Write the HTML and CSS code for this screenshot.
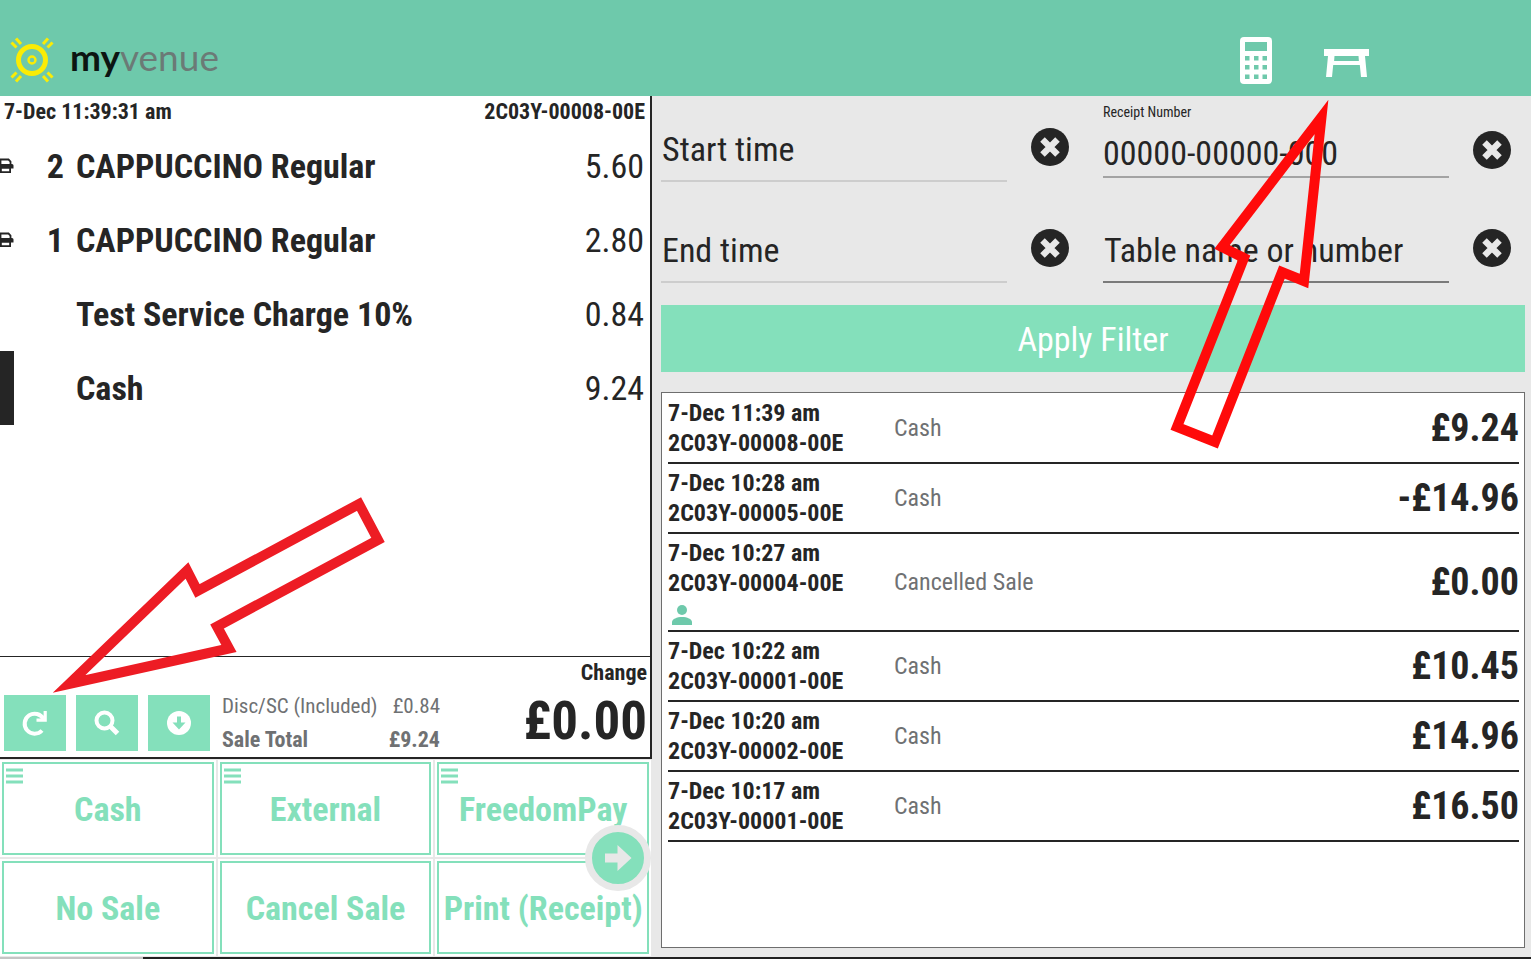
FILE: index.html
```html
<!DOCTYPE html>
<html lang="en">
<head>
    <meta charset="UTF-8">
    <meta name="viewport" content="width=device-width, initial-scale=1.0">
    <title>MyVenue - Sales History</title>
    <link rel="stylesheet" href="styles.css">
</head>
<body>
    <!-- shared icons -->
    <svg class="sprite" aria-hidden="true">
        <symbol id="i-clear" viewBox="0 0 38 38">
            <circle cx="19" cy="19" r="19" fill="#252525"/>
            <path d="M11.500 11.500 26.500 26.500M26.500 11.500 11.500 26.500" stroke="#e8e8e8" stroke-width="6.400"/>
        </symbol>
        <symbol id="i-print" viewBox="0 0 18 16">
            <path d="M4.500 7V1.500h8L14.500 3.500V7" fill="none" stroke="#252525" stroke-width="1.800"/>
            <path d="M2 6h14a1.500 1.500 0 0 1 1.500 1.500v3h-3V9.500h-10v1H1V7.500A1.500 1.500 0 0 1 2 6z" fill="#252525"/>
            <path d="M4.900 9.900h9.200v4.300H4.900z" fill="#fff" stroke="#252525" stroke-width="1.800"/>
        </symbol>
        <symbol id="i-menu" viewBox="0 0 17 16">
            <path d="M0 2h17M0 8h17M0 14h17" stroke="#84e0bb" stroke-width="3"/>
        </symbol>
    </svg>

    <header class="topbar">
        <a class="brand" href="#">
            <svg class="brand-mark" viewBox="0 0 44 46" fill="none" stroke="#fbec05">
                <circle cx="22" cy="23" r="13.500" stroke-width="5"/>
                <circle cx="22" cy="23" r="3.500" stroke-width="2.400"/>
                <path d="M1.500 5.500 6.500 10.500M6 1.500 11 7M42.500 5.500 37.500 10.500M38 1.500 33 7M1.500 40.500 6.500 35.500M6 44.500 11 39M42.500 40.500 37.500 35.500M38 44.500 33 39" stroke-width="3"/>
            </svg>
            <span class="brand-name"><b>my</b>venue</span>
        </a>
        <nav class="tools">
            <button class="tool" type="button" aria-label="Calculator">
                <svg width="32" height="47" viewBox="0 0 32 47">
                    <rect width="32" height="47" rx="4" fill="#fff"/>
                    <path d="M5 5h22v9H5zM5 19h4.500v4.500H5zM14 19h4.500v4.500H14zM22.500 19H27v4.500h-4.500zM5 28h4.500v4.500H5zM14 28h4.500v4.500H14zM22.500 28H27v4.500h-4.500zM5 37.500h4.500V42H5zM14 37.500h4.500V42H14zM22.500 37.500H27V42h-4.500z" fill="#6ec9ab"/>
                </svg>
            </button>
            <button class="tool" type="button" aria-label="Tables">
                <svg width="46" height="36" viewBox="0 0 46 36" fill="#fff">
                    <path d="M0 7h45v7h-4l2 21h-6l-1.200-12H9.200L8 35H2l2-21H0zM10.500 14l-.400 5h24.800l-.400-5z" fill-rule="evenodd"/>
                </svg>
            </button>
        </nav>
    </header>

    <main class="main">
        <section class="sale">
            <div class="ticket">
                <div class="ticket-head">
                    <span>7-Dec 11:39:31 am</span>
                    <span>2C03Y-00008-00E</span>
                </div>
                <table class="items">
                    <tr>
                        <td class="flag"><svg width="18" height="16"><use href="#i-print"/></svg></td>
                        <td class="qty">2</td>
                        <td class="name">CAPPUCCINO Regular</td>
                        <td class="price">5.60</td>
                    </tr>
                    <tr>
                        <td class="flag"><svg width="18" height="16"><use href="#i-print"/></svg></td>
                        <td class="qty">1</td>
                        <td class="name">CAPPUCCINO Regular</td>
                        <td class="price">2.80</td>
                    </tr>
                    <tr>
                        <td class="flag"></td>
                        <td class="qty"></td>
                        <td class="name">Test Service Charge 10%</td>
                        <td class="price">0.84</td>
                    </tr>
                    <tr>
                        <td class="flag selected"></td>
                        <td class="qty"></td>
                        <td class="name">Cash</td>
                        <td class="price">9.24</td>
                    </tr>
                </table>

                <div class="summary">
                    <div class="actions">
                        <button class="action" type="button" aria-label="Refresh">
                            <svg width="26" height="26" viewBox="0 0 26 26" fill="none" stroke="#fff">
                                <path d="M20 20.500A10 10 0 1 1 21.500 9" stroke-width="4"/>
                                <path d="M23.200 1v9.200H14.500" stroke-width="3.200"/>
                            </svg>
                        </button>
                        <button class="action" type="button" aria-label="Search">
                            <svg width="26" height="26" viewBox="0 0 26 26" fill="none" stroke="#fff">
                                <circle cx="10.500" cy="10.500" r="8" stroke-width="4"/>
                                <path d="M16 16l7.500 7.500" stroke-width="5"/>
                            </svg>
                        </button>
                        <button class="action" type="button" aria-label="Down">
                            <svg width="26" height="26" viewBox="0 0 26 26">
                                <circle cx="13" cy="13" r="12" fill="#fff"/>
                                <path d="M11 6.500h4v6h4.500L13 19.500 6.500 12.500H11z" fill="#84e0bb"/>
                            </svg>
                        </button>
                    </div>
                    <table class="totals">
                        <tr class="light"><td>Disc/SC (Included)</td><td>£0.84</td></tr>
                        <tr class="strong"><td>Sale Total</td><td>£9.24</td></tr>
                    </table>
                    <div class="change">
                        <span class="change-label">Change</span>
                        <span class="change-value">£0.00</span>
                    </div>
                </div>
            </div>

            <div class="pay">
                <button class="pay-btn" type="button"><svg class="menu" width="17" height="16"><use href="#i-menu"/></svg>Cash</button>
                <button class="pay-btn" type="button"><svg class="menu" width="17" height="16"><use href="#i-menu"/></svg>External</button>
                <button class="pay-btn" type="button"><svg class="menu" width="17" height="16"><use href="#i-menu"/></svg>FreedomPay</button>
                <button class="pay-btn" type="button">No Sale</button>
                <button class="pay-btn" type="button">Cancel Sale</button>
                <button class="pay-btn" type="button">Print (Receipt)</button>
                <button class="next" type="button" aria-label="Next page">
                    <svg width="28" height="26" viewBox="0 0 28 26">
                        <path d="M1 8.500h12.500V0L27.500 13 13.500 26v-8.500H1z" fill="#e8e8e8"/>
                    </svg>
                </button>
            </div>
        </section>

        <section class="history">
            <form class="filters">
                <div class="field">
                    <input class="field-input" type="text" placeholder="Start time" aria-label="Start time">
                    <button class="clear" type="button" aria-label="Clear start time"><svg width="38" height="38"><use href="#i-clear"/></svg></button>
                </div>
                <div class="field labelled">
                    <div class="field-body">
                        <label class="field-label" for="receipt">Receipt Number</label>
                        <input class="field-input" id="receipt" type="text" placeholder="00000-00000-000">
                    </div>
                    <button class="clear" type="button" aria-label="Clear receipt number"><svg width="38" height="38"><use href="#i-clear"/></svg></button>
                </div>
                <div class="field">
                    <input class="field-input" type="text" placeholder="End time" aria-label="End time">
                    <button class="clear" type="button" aria-label="Clear end time"><svg width="38" height="38"><use href="#i-clear"/></svg></button>
                </div>
                <div class="field table-field">
                    <input class="field-input" type="text" placeholder="Table name or number" aria-label="Table name or number">
                    <button class="clear" type="button" aria-label="Clear table"><svg width="38" height="38"><use href="#i-clear"/></svg></button>
                </div>
                <button class="apply" type="button">Apply Filter</button>
            </form>

            <div class="results">
                <table class="sales">
                    <tr>
                        <td class="ref">7-Dec 11:39 am<br>2C03Y-00008-00E</td>
                        <td class="type">Cash</td>
                        <td class="amount">£9.24</td>
                    </tr>
                    <tr>
                        <td class="ref">7-Dec 10:28 am<br>2C03Y-00005-00E</td>
                        <td class="type">Cash</td>
                        <td class="amount">-£14.96</td>
                    </tr>
                    <tr>
                        <td class="ref">7-Dec 10:27 am<br>2C03Y-00004-00E
                            <svg class="person" width="20" height="20" viewBox="0 0 20 20" fill="#6ec9ab">
                                <circle cx="10" cy="5" r="5"/>
                                <path d="M0 20v-3c0-3 5-5 10-5s10 2 10 5v3z"/>
                            </svg>
                        </td>
                        <td class="type">Cancelled Sale</td>
                        <td class="amount">£0.00</td>
                    </tr>
                    <tr>
                        <td class="ref">7-Dec 10:22 am<br>2C03Y-00001-00E</td>
                        <td class="type">Cash</td>
                        <td class="amount">£10.45</td>
                    </tr>
                    <tr>
                        <td class="ref">7-Dec 10:20 am<br>2C03Y-00002-00E</td>
                        <td class="type">Cash</td>
                        <td class="amount">£14.96</td>
                    </tr>
                    <tr>
                        <td class="ref">7-Dec 10:17 am<br>2C03Y-00001-00E</td>
                        <td class="type">Cash</td>
                        <td class="amount">£16.50</td>
                    </tr>
                </table>
            </div>
        </section>
    </main>
    <div class="bottom-edge"></div>

    <!-- pointer arrows over the page -->
    <svg class="arrow arrow-refresh" width="340" height="200" viewBox="50 495 340 200" fill="none" stroke="#ed1c24" stroke-width="10" stroke-miterlimit="20" aria-hidden="true">
        <path d="M69 684 187 570.500 197.500 591 359 504 378 540 217 626.500 229 648.500z"/>
    </svg>
    <svg class="arrow arrow-tables" width="160" height="350" viewBox="1170 100 160 350" fill="none" stroke="#ff0a0a" stroke-width="10" stroke-miterlimit="20" aria-hidden="true">
        <path d="M1321.500 117 1222 247 1244 258 1177 427 1215 442 1282 272 1304 281z"/>
    </svg>
</body>
</html>
```
FILE: styles.css
```css
* {
    box-sizing: border-box;
}
body {
    margin: 0;
    min-height: 100vh;
    display: flex;
    flex-direction: column;
    position: relative;
    background: #e8e8e8;
    color: #252525;
    font-family: "Roboto Condensed", "Liberation Sans Narrow", Roboto, sans-serif;
    font-size: 24px;
}
button, input {
    font: inherit;
    color: inherit;
}
button {
    border: none;
    padding: 0;
    background: none;
    cursor: pointer;
}
svg {
    display: block;
}
table {
    border-collapse: collapse;
    width: 100%;
}
td {
    padding: 0;
}
.sprite {
    position: absolute;
    width: 0;
    height: 0;
}

/* top bar */
.topbar {
    height: 96px;
    padding: 24px 161px 0 10px;
    display: flex;
    align-items: center;
    justify-content: space-between;
    background: #6ec9ab;
}
.brand {
    display: flex;
    align-items: center;
    gap: 16px;
    text-decoration: none;
}
.brand-mark {
    width: 44px;
    height: 46px;
}
.brand-name {
    padding-bottom: 6px;
    font-family: Lato, sans-serif;
    font-size: 37px;
    line-height: 44px;
    color: #6b7a76;
}
.brand-name b {
    font-weight: 700;
    color: #0c1512;
}
.tools {
    display: flex;
    align-items: center;
    gap: 52px;
}

.main {
    flex: 1;
    display: grid;
    grid-template-columns: 652fr 879fr;
}

/* current sale */
.sale {
    display: flex;
    flex-direction: column;
}
.ticket {
    flex: 1;
    display: flex;
    flex-direction: column;
    background: #fff;
    border-right: 2px solid #252525;
    border-bottom: 2px solid #252525;
}
.ticket-head {
    display: flex;
    justify-content: space-between;
    padding: 0 5px 2px 4px;
    font-size: 22px;
    font-weight: 700;
    line-height: 31px;
}
.items {
    font-size: 34px;
}
.items td {
    height: 74px;
}
.flag {
    width: 14px;
}
.flag svg {
    margin-left: -4px;
}
.selected {
    background: #252525;
}
.qty {
    width: 50px;
    text-align: right;
    font-weight: 700;
}
.items .name {
    padding-left: 12px;
    font-weight: 700;
}
.price {
    padding-right: 6px;
    text-align: right;
}
.summary {
    display: flex;
    align-items: flex-end;
    gap: 12px;
    margin-top: auto;
    padding: 4px 3px 0 4px;
    border-top: 1px solid #252525;
}
.actions {
    display: flex;
    gap: 10px;
    padding-bottom: 6px;
}
.action {
    width: 62px;
    height: 56px;
    display: flex;
    align-items: center;
    justify-content: center;
    background: #84e0bb;
}
.totals {
    width: 218px;
    line-height: 34px;
    white-space: nowrap;
    color: #6f7173;
}
.totals td:last-child {
    text-align: right;
}
.light {
    font-size: 21px;
}
.strong {
    font-size: 22px;
    font-weight: 700;
}
.change {
    display: flex;
    flex-direction: column;
    align-items: flex-end;
    margin-left: auto;
    font-weight: 700;
}
.change-label {
    font-size: 22px;
    line-height: 24px;
}
.change-value {
    font-size: 53px;
    line-height: 72px;
}

/* payment buttons */
.pay {
    position: relative;
    display: grid;
    grid-template-columns: repeat(3, 1fr);
    grid-auto-rows: 93px;
    gap: 6px;
    padding: 3px 3px 3px 2px;
}
.pay-btn {
    position: relative;
    background: #fff;
    border: 2px solid #84e0bb;
    box-shadow: 0 0 0 2px #fff;
    color: #84e0bb;
    font-size: 34px;
    font-weight: 700;
    white-space: nowrap;
}
.menu {
    position: absolute;
    top: 4px;
    left: 2px;
}
.next {
    position: absolute;
    top: 66px;
    right: 1px;
    width: 66px;
    height: 66px;
    display: flex;
    align-items: center;
    justify-content: center;
    background: #84e0bb;
    border: 7px solid #e8e8e8;
    border-radius: 50%;
}

/* history */
.history {
    display: flex;
    flex-direction: column;
    padding: 0 6px 9px 9px;
}
.filters {
    display: grid;
    grid-template-columns: 442fr 422fr;
    grid-template-rows: 86px 101px auto;
}
.field {
    display: flex;
    align-items: flex-end;
    gap: 24px;
    padding-right: 34px;
}
.field:nth-child(even) {
    padding-right: 14px;
}
.field-body {
    flex: 1;
    min-width: 0;
}
.field-label {
    display: block;
    padding-bottom: 8px;
    font-size: 14px;
    line-height: 18px;
}
.field-input {
    flex: 1;
    width: 100%;
    min-width: 0;
    height: 64px;
    padding: 0 1px;
    border: none;
    border-bottom: 2px solid #cdcdcd;
    border-radius: 0;
    background: transparent;
    font-size: 34px;
    outline: none;
}
.field-input::placeholder {
    color: #252525;
    opacity: 1;
}
.clear {
    flex: none;
    margin-bottom: 16px;
}
.labelled {
    padding-bottom: 4px;
}
.labelled .field-input {
    display: block;
    height: 49px;
    padding: 0;
    border-color: #a3a3a3;
}
.labelled .clear {
    margin-bottom: 9px;
}
.table-field .field-input {
    border-color: #7a7a7a;
}
.apply {
    grid-column: 1 / -1;
    height: 67px;
    margin-top: 22px;
    background: #84e0bb;
    color: #fff;
    font-size: 34px;
}
.results {
    flex: 1;
    margin-top: 20px;
    padding: 1px 5px 1px 6px;
    background: #fff;
    border: 1px solid #6e6e6e;
}
.sales tr {
    border-bottom: 2px solid #252525;
}
.ref {
    width: 226px;
    padding: 4px 0;
    font-weight: 700;
    line-height: 30px;
}
.person {
    margin: 7px 0 1px 4px;
}
.type {
    color: #6f7173;
}
.amount {
    text-align: right;
    font-size: 38px;
    font-weight: 700;
}

.bottom-edge {
    height: 2px;
    background: linear-gradient(to right, #c4c4c4 143px, #202020 143px);
}

/* arrows */
.arrow {
    position: absolute;
    pointer-events: none;
}
.arrow-refresh {
    top: 495px;
    left: 50px;
}
.arrow-tables {
    top: 100px;
    right: 201px;
}
```
